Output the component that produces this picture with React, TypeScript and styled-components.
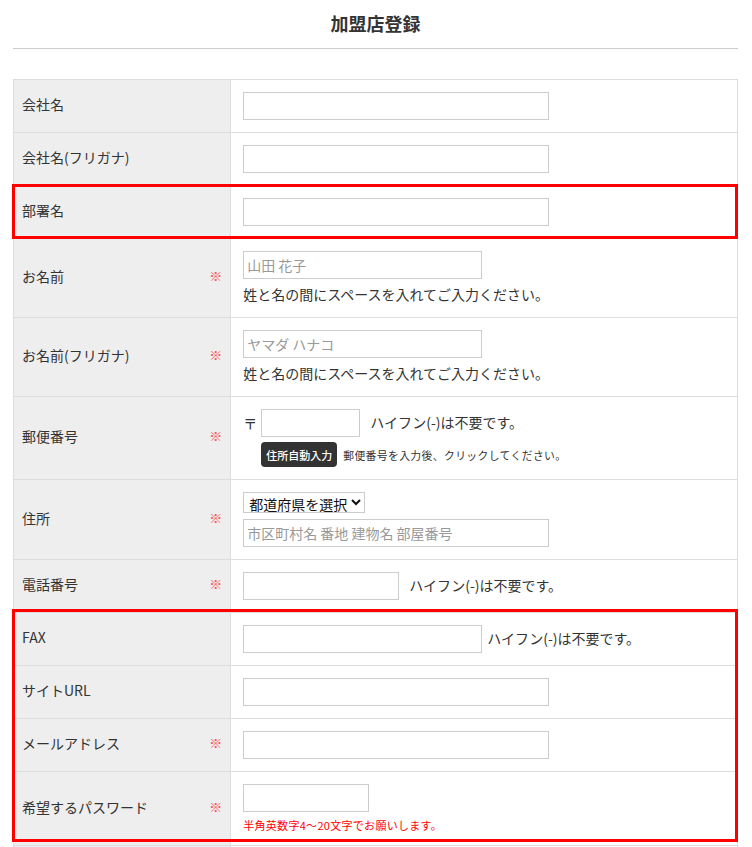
import styled, { createGlobalStyle } from 'styled-components'

const GlobalStyle = createGlobalStyle`
  html, body {
    margin: 0;
    padding: 0;
    background: #fff;
  }
  body {
    font-family: "Noto Sans CJK JP", "Noto Sans", sans-serif;
    font-size: 14px;
    letter-spacing: 0;
    color: #333;
  }
`

const Page = styled.div`
  width: 725px;
  padding: 0 14px 0 13px;
`

const Title = styled.h1`
  margin: 0 0 30px;
  padding: 9px 0 10px;
  font-size: 18px;
  line-height: 29px;
  font-weight: bold;
  text-align: center;
  border-bottom: 1px solid #ccc;
`

const TableWrap = styled.div`
  position: relative;
`

const FormTable = styled.table`
  width: 100%;
  border-collapse: collapse;
`

const LabelCell = styled.th`
  width: 30%;
  padding: 0 8px 4px 8px;
  background: #eee;
  border: 1px solid #ddd;
  text-align: left;
  font-weight: normal;
  vertical-align: middle;
`

const LabelInner = styled.div`
  display: flex;
  align-items: center;
  justify-content: space-between;
  line-height: 20px;
`

const Required = styled.span`
  color: #ff4d4d;
  font-size: 13px;
`

const FieldCell = styled.td`
  padding: 12px;
  border: 1px solid #ddd;
  vertical-align: middle;
`

const Line = styled.div<{ $gap?: number; $indent?: number; $mt?: number }>`
  display: flex;
  align-items: center;
  gap: ${(p) => p.$gap ?? 0}px;
  margin-left: ${(p) => p.$indent ?? 0}px;
  margin-top: ${(p) => p.$mt ?? 0}px;
`

const TextInput = styled.input<{ $w: number }>`
  display: block;
  box-sizing: border-box;
  width: ${(p) => p.$w}px;
  height: 28px;
  margin: 0;
  padding: 0 3px;
  border: 1px solid #ccc;
  border-radius: 0;
  background: #fff;
  font-family: "Noto Sans CJK JP", sans-serif;
  font-size: 14px;
  color: #333;
  outline: none;
  &::placeholder {
    color: #999;
  }
`

const Select = styled.select`
  box-sizing: border-box;
  height: 21px;
  margin: 0;
  padding: 0 1px;
  border: 1px solid #ccc;
  border-radius: 0;
  background: #fff;
  font-family: "Noto Sans CJK JP", sans-serif;
  font-size: 14px;
  color: #111;
`

const Note = styled.div`
  margin-top: 5px;
  line-height: 21px;
`

const Hint = styled.span<{ $ml?: number }>`
  margin-left: ${(p) => p.$ml ?? 0}px;
  padding-bottom: 3px;
  white-space: nowrap;
`

const SmallHint = styled.span`
  font-size: 10.8px;
  letter-spacing: 0.4px;
`

const Warn = styled.div`
  margin-top: 5px;
  line-height: 16px;
  font-size: 11px;
  letter-spacing: 0.3px;
  color: #f00;
`

const AutoButton = styled.button`
  height: 25px;
  padding: 0 5px;
  border: none;
  border-radius: 4px;
  background: #333;
  color: #fff;
  font-family: "Noto Sans CJK JP", sans-serif;
  font-size: 11px;
  font-weight: 500;
  cursor: pointer;
`

const Mark = styled.span`
  width: 18px;
`

const Highlight = styled.div<{ $top: number; $left: number; $w: number; $h: number }>`
  position: absolute;
  top: ${(p) => p.$top}px;
  left: ${(p) => p.$left}px;
  width: ${(p) => p.$w}px;
  height: ${(p) => p.$h}px;
  box-sizing: border-box;
  border: 3px solid #f00;
  pointer-events: none;
`

function Label({ text, required }: { text: string; required?: boolean }) {
  return (
    <LabelCell>
      <LabelInner>
        <span>{text}</span>
        {required && <Required>※</Required>}
      </LabelInner>
    </LabelCell>
  )
}

export default function App() {
  return (
    <>
      <GlobalStyle />
      <Page>
        <Title>加盟店登録</Title>
        <TableWrap>
          <FormTable>
            <tbody>
              <tr>
                <Label text="会社名" />
                <FieldCell>
                  <TextInput $w={306} />
                </FieldCell>
              </tr>
              <tr>
                <Label text="会社名(フリガナ)" />
                <FieldCell>
                  <TextInput $w={306} />
                </FieldCell>
              </tr>
              <tr>
                <Label text="部署名" />
                <FieldCell>
                  <TextInput $w={306} />
                </FieldCell>
              </tr>
              <tr>
                <Label text="お名前" required />
                <FieldCell>
                  <TextInput $w={239} placeholder="山田 花子" />
                  <Note>姓と名の間にスペースを入れてご入力ください。</Note>
                </FieldCell>
              </tr>
              <tr>
                <Label text="お名前(フリガナ)" required />
                <FieldCell>
                  <TextInput $w={239} placeholder="ヤマダ ハナコ" />
                  <Note>姓と名の間にスペースを入れてご入力ください。</Note>
                </FieldCell>
              </tr>
              <tr>
                <Label text="郵便番号" required />
                <FieldCell>
                  <Line>
                    <Mark>〒</Mark>
                    <TextInput $w={99} />
                    <Hint $ml={10}>ハイフン(-)は不要です。</Hint>
                  </Line>
                  <Line $indent={18} $mt={5} $gap={6}>
                    <AutoButton type="button">住所自動入力</AutoButton>
                    <SmallHint>郵便番号を入力後、クリックしてください。</SmallHint>
                  </Line>
                </FieldCell>
              </tr>
              <tr>
                <Label text="住所" required />
                <FieldCell>
                  <Line>
                    <Select defaultValue="">
                      <option value="">都道府県を選択</option>
                      <option value="tokyo">東京都</option>
                      <option value="osaka">大阪府</option>
                    </Select>
                  </Line>
                  <Line $mt={6}>
                    <TextInput $w={306} placeholder="市区町村名 番地 建物名 部屋番号" />
                  </Line>
                </FieldCell>
              </tr>
              <tr>
                <Label text="電話番号" required />
                <FieldCell>
                  <Line $gap={10}>
                    <TextInput $w={156} />
                    <Hint>ハイフン(-)は不要です。</Hint>
                  </Line>
                </FieldCell>
              </tr>
              <tr>
                <Label text="FAX" />
                <FieldCell>
                  <Line $gap={5}>
                    <TextInput $w={239} />
                    <Hint>ハイフン(-)は不要です。</Hint>
                  </Line>
                </FieldCell>
              </tr>
              <tr>
                <Label text="サイトURL" />
                <FieldCell>
                  <TextInput $w={306} />
                </FieldCell>
              </tr>
              <tr>
                <Label text="メールアドレス" required />
                <FieldCell>
                  <TextInput $w={306} />
                </FieldCell>
              </tr>
              <tr>
                <Label text="希望するパスワード" required />
                <FieldCell>
                  <TextInput $w={126} type="password" />
                  <Warn>半角英数字4～20文字でお願いします。</Warn>
                </FieldCell>
              </tr>
              <tr>
                <Label text="パスワード(確認)" required />
                <FieldCell>
                  <TextInput $w={126} type="password" />
                </FieldCell>
              </tr>
            </tbody>
          </FormTable>
          <Highlight $top={105} $left={-1} $w={726} $h={55} />
          <Highlight $top={530} $left={-1.5} $w={726.5} $h={233} />
        </TableWrap>
      </Page>
    </>
  )
}
